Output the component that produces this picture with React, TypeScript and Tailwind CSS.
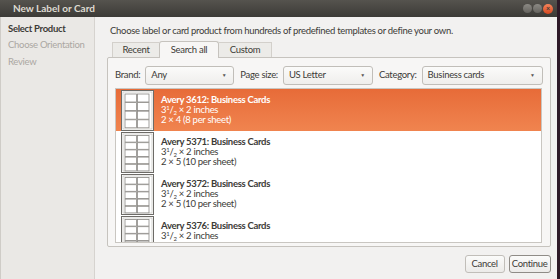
import React from 'react';

type Product = {
  id: string;
  name: string;
  size: string;
  layout: string;
  rows: number;
};

const products: Product[] = [
  { id: '3612', name: 'Avery 3612: Business Cards', size: '2 inches', layout: '2 × 4 (8 per sheet)', rows: 4 },
  { id: '5371', name: 'Avery 5371: Business Cards', size: '2 inches', layout: '2 × 5 (10 per sheet)', rows: 5 },
  { id: '5372', name: 'Avery 5372: Business Cards', size: '2 inches', layout: '2 × 5 (10 per sheet)', rows: 5 },
  { id: '5376', name: 'Avery 5376: Business Cards', size: '2 inches', layout: '2 × 5 (10 per sheet)', rows: 5 },
];

function SheetThumb({ rows }: { rows: number }) {
  const cellH = rows === 4 ? 8 : 6.6;
  const top = rows === 4 ? 4 : 3.5;
  const cells = [];
  for (let r = 0; r < rows; r++) {
    for (let c = 0; c < 2; c++) {
      cells.push(
        <rect
          key={`${r}-${c}`}
          x={4 + c * 12.5}
          y={top + r * (cellH + 0.6)}
          width={11.5}
          height={cellH}
          fill="#fff"
          stroke="#8a8884"
          strokeWidth={0.8}
        />
      );
    }
  }
  return (
    <svg width="33" height="41" viewBox="0 0 33 41" className="shrink-0">
      <rect x="0.5" y="0.5" width="32" height="40" fill="#fff" stroke="#6d6b67" />
      <rect x="2" y="2" width="29" height="37" fill="#fff" stroke="#b9b7b3" strokeWidth={0.6} />
      {cells}
    </svg>
  );
}

function Combo({ value, width }: { value: string; width: string }) {
  return (
    <div className={`${width} h-[19px] shrink-0 flex items-center justify-between pl-[5px] pr-[7px] rounded-[3px] border border-[#c1beb9] bg-gradient-to-b from-[#fbfbfa] to-[#efeeec] text-[#3c3b37]`}>
      <span>{value}</span>
      <span className="text-[5px] text-[#5a5853]">▼</span>
    </div>
  );
}

export default function App() {
  return (
    <div
      className="w-[560px] h-[279px] flex bg-[#2e1a28] overflow-hidden text-[9.5px] tracking-[-0.3px] text-[#3c3b37] whitespace-nowrap"
      style={{ fontFamily: 'Lato, "Open Sans", sans-serif' }}
    >
      <div className="w-[557px] h-full flex flex-col bg-[#f2f1f0]">
        {/* title bar */}
        <div className="h-[17px] shrink-0 flex items-center justify-between pl-[13px] pr-[4px] bg-gradient-to-b from-[#55534e] to-[#3c3b37]">
          <span className="font-bold text-[10px] tracking-[0px] text-[#dfdbd2]">New Label or Card</span>
          <div className="flex items-center gap-[1px]">
            <span className="w-[9px] h-[9px] rounded-full bg-gradient-to-b from-[#8c8a85] to-[#65635e]" />
            <span className="w-[9px] h-[9px] rounded-full bg-gradient-to-b from-[#8c8a85] to-[#65635e]" />
            <span className="w-[10px] h-[10px] rounded-full bg-gradient-to-b from-[#f6845a] to-[#d5471e] flex items-center justify-center text-[7px] leading-none text-[#3c3b37] font-bold">
              ×
            </span>
          </div>
        </div>

        <div className="flex-1 flex min-h-0">
          {/* sidebar */}
          <div className="w-[95px] shrink-0 flex flex-col gap-[2px] pt-[5px] pl-[7px] bg-[#eae8e5] border-r border-[#d6d3cf] border-l border-l-[#cfccc7]">
            <span className="font-bold text-[#3c3b37]">Select Product</span>
            <span className="text-[#aaa7a2]">Choose Orientation</span>
            <span className="text-[#aaa7a2]">Review</span>
          </div>

          {/* main */}
          <div className="flex-1 flex flex-col pl-[12px] pr-[8px] pt-[8px]">
            <p className="ml-[3px] leading-[12px]">
              Choose label or card product from hundreds of predefined templates or define your own.
            </p>

            {/* tabs */}
            <div className="mt-[4px] flex items-end pl-[5px] h-[16px]">
              <div className="w-[47px] h-[15px] flex items-center justify-center border-l border-t border-[#d3d0cb] bg-[#ecebe8]">
                Recent
              </div>
              <div className="w-[60px] h-[17px] -mb-px flex items-center justify-center rounded-t-[3px] border border-b-0 border-[#c6c3be] bg-[#f7f6f5] relative z-10">
                Search all
              </div>
              <div className="w-[53px] h-[15px] flex items-center justify-center border-r border-t border-[#d3d0cb] bg-[#ecebe8]">
                Custom
              </div>
            </div>

            {/* notebook */}
            <div className="h-[190px] flex flex-col px-[7px] pt-[8px] border border-[#c6c3be] rounded-[2px] bg-[#f7f6f5]">
              <div className="flex items-center h-[19px]">
                <span className="mr-[5px]">Brand:</span>
                <Combo value="Any" width="w-[89px]" />
                <span className="ml-[6px] mr-[5px]">Page size:</span>
                <Combo value="US Letter" width="w-[90px]" />
                <span className="ml-[6px] mr-[5px]">Category:</span>
                <Combo value="Business cards" width="w-[121px]" />
              </div>

              <div className="mt-[3px] h-[155px] mr-[1px] overflow-hidden border border-[#c9c6c1] bg-white">
                {products.map((p, i) => {
                  const selected = i === 0;
                  return (
                    <div
                      key={p.id}
                      className={`h-[42px] flex items-start gap-[7px] pl-[5px] ${
                        selected ? 'bg-gradient-to-b from-[#e76b38] to-[#f0844f] text-white' : 'text-[#3c3b37]'
                      }`}
                    >
                      <div className="self-center">
                        <SheetThumb rows={p.rows} />
                      </div>
                      <div className="flex flex-col leading-[10px] pt-[6px]">
                        <span className="font-bold">{p.name}</span>
                        <span>
                          3<sup className="text-[6px]">1</sup>/<sub className="text-[6px]">2</sub> × {p.size}
                        </span>
                        {i < 3 && <span>{p.layout}</span>}
                      </div>
                    </div>
                  );
                })}
              </div>
            </div>

            {/* buttons */}
            <div className="flex justify-end gap-[4px] mt-[8px]">
              <button className="w-[40px] h-[18px] rounded-[3px] border border-[#c1beb9] bg-gradient-to-b from-[#fbfbfa] to-[#ecebe9] text-[#3c3b37]">
                Cancel
              </button>
              <button className="w-[42px] h-[18px] rounded-[3px] border border-[#8f8c87] bg-gradient-to-b from-[#fbfbfa] to-[#ecebe9] text-[#3c3b37]">
                Continue
              </button>
            </div>
          </div>
        </div>
      </div>
    </div>
  );
}
